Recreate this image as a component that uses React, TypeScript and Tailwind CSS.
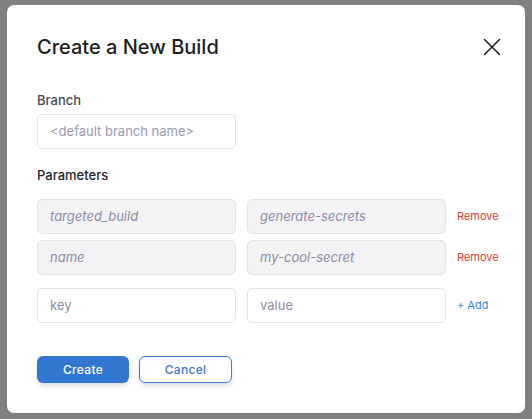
import { X } from "lucide-react";

const font = { fontFamily: "Inter, 'Noto Sans', sans-serif" };

function Param({ k, v }: { k: string; v: string }) {
  return (
    <div className="flex items-center gap-[11px]">
      <div className="w-[199px] h-[35px] flex items-center px-3 bg-[#f3f3f6] border border-[#e3e3e8] rounded-[5px] text-[13px] italic text-[#8d8da3]">
        {k}
      </div>
      <div className="w-[199px] h-[35px] flex items-center px-3 bg-[#f3f3f6] border border-[#e3e3e8] rounded-[5px] text-[13px] italic text-[#8d8da3]">
        {v}
      </div>
      <span className="text-[11px] text-[#e03a2e]">Remove</span>
    </div>
  );
}

export default function App() {
  return (
    <div className="w-[532px] h-[419px] bg-[#808080] pt-[5px] pl-[7px]" style={font}>
      {/* モーダル */}
      <div className="w-[518px] h-[408px] bg-white rounded-[7px] pl-[30px] pr-[26px] pt-[28px]">
        <div className="flex items-center justify-between h-[28px]">
          <h1 className="text-[20px] font-medium text-[#1d1d22]">Create a New Build</h1>
          <X className="w-[30px] h-[30px] -mr-[8px] text-[#1d1d22]" strokeWidth={1.2} />
        </div>

        <div className="mt-[30px] text-[13px] font-medium text-[#4a4a55] leading-[18px]">Branch</div>
        <div className="mt-[5px] w-[199px] h-[35px] flex items-center px-3 border border-[#e3e3e8] rounded-[5px] text-[13px] text-[#9a9aae]">
          &lt;default branch name&gt;
        </div>

        <div className="mt-[17px] text-[13px] font-medium text-[#23232b] leading-[18px]">Parameters</div>
        <div className="mt-[15px] flex flex-col gap-[6px]">
          <Param k="targeted_build" v="generate-secrets" />
          <Param k="name" v="my-cool-secret" />
        </div>
        <div className="mt-[13px] flex items-center gap-[11px]">
          <div className="w-[199px] h-[35px] flex items-center px-3 border border-[#e3e3e8] rounded-[5px] text-[13px] text-[#8d8da3]">
            key
          </div>
          <div className="w-[199px] h-[35px] flex items-center px-3 border border-[#e3e3e8] rounded-[5px] text-[13px] text-[#8d8da3]">
            value
          </div>
          <span className="text-[11px] text-[#3a86d8]">+ Add</span>
        </div>

        <div className="mt-[33px] flex gap-[10px]">
          <button className="w-[92px] h-[27px] rounded-[6px] bg-[#3277cf] text-white text-[12px] font-medium tracking-[0.3px] shadow-md">
            Create
          </button>
          <button className="w-[93px] h-[27px] rounded-[6px] border border-[#3a7bd0] bg-white text-[#3a78c6] text-[12px] font-medium tracking-[0.3px] shadow-md">
            Cancel
          </button>
        </div>
      </div>
    </div>
  );
}
